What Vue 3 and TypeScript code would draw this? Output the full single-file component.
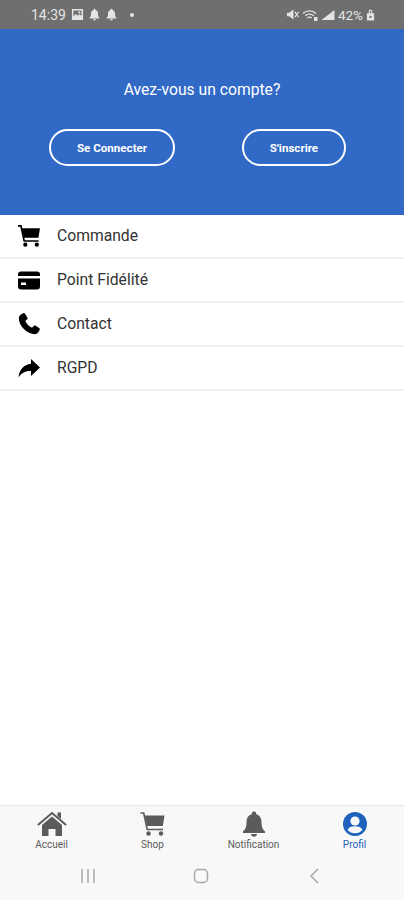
<script setup lang="ts">
interface MenuItem {
  label: string;
  icon: "cart" | "card" | "phone" | "share";
}

interface TabItem {
  label: string;
  icon: "home" | "cart" | "bell" | "user";
  active?: boolean;
}

const menu: MenuItem[] = [
  { label: "Commande", icon: "cart" },
  { label: "Point Fidélité", icon: "card" },
  { label: "Contact", icon: "phone" },
  { label: "RGPD", icon: "share" },
];

const tabs: TabItem[] = [
  { label: "Accueil", icon: "home" },
  { label: "Shop", icon: "cart" },
  { label: "Notification", icon: "bell" },
  { label: "Profil", icon: "user", active: true },
];

const BELL = "M12 1.2c1 0 1.8.8 1.8 1.8v.5c3 .8 4.7 3.4 4.7 6.5 0 4 .7 6.3 2.5 8V19.500H3V18c1.800-1.700 2.500-4 2.500-8 0-3.100 1.700-5.700 4.700-6.500V3c0-1 .8-1.800 1.800-1.800zM9.300 20.500h5.400c0 1.500-1.200 2.600-2.700 2.600s-2.700-1.100-2.700-2.600z";
const BASKET = "M4.300 3.600H24L22.300 14H6.400z";
const HANDLE = "M0 1h3.200l3.500 16.500H22.500";
</script>

<template>
  <div class="screen">
    <header class="status">
      <div class="status__left">
        <span class="status__time">14:39</span>
        <svg class="status__icon" viewBox="0 0 14 14" width="13" height="13">
          <path fill="#e4e4e4" fill-rule="evenodd" d="M1 1h12v12H1zM2.600 2.600v6.200l2.600-2.400 2 1.800 2-1.400 2.200 1.600V2.600zM9 3.600a1.200 1.200 0 1 1 0 2.400 1.200 1.200 0 0 1 0-2.400z" />
        </svg>
        <svg class="status__icon" viewBox="0 0 24 24" width="13" height="13"><path fill="#e4e4e4" :d="BELL" /></svg>
        <svg class="status__icon" viewBox="0 0 24 24" width="13" height="13"><path fill="#e4e4e4" :d="BELL" /></svg>
        <span class="status__dot"></span>
      </div>
      <div class="status__right">
        <svg viewBox="0 0 14 14" width="13" height="13">
          <path fill="#e4e4e4" d="M1 5h2.400L8 1.600v10.800L3.400 9H1z" />
          <path stroke="#e4e4e4" stroke-width="1.300" d="M9.500 4l4 6M13.500 4l-4 6" />
        </svg>
        <svg viewBox="0 0 16 14" width="16" height="14">
          <path fill="none" stroke="#e4e4e4" stroke-width="1.400" d="M1 5.400c3.600-3.400 9.400-3.400 13 0M3.200 7.800c2.400-2.200 6.200-2.200 8.600 0M5.400 10c1.200-1 3-1 4.200 0" />
          <path fill="#e4e4e4" d="M12 9h3.500v4H12z" />
        </svg>
        <svg viewBox="0 0 14 12" width="14" height="12"><path fill="#e4e4e4" d="M13.500 1v10H.5z" /></svg>
        <span class="status__pct">42%</span>
        <svg viewBox="0 0 10 12" width="9" height="12">
          <path fill="#e4e4e4" fill-rule="evenodd" d="M3 1.800a2 1.800 0 0 1 4 0V4h2v8H1V4h2zM4.200 4h1.600V2a.8.8 0 0 0-1.600 0zM5 6.800a1.300 1.300 0 1 0 0 2.600 1.300 1.300 0 0 0 0-2.600z" />
        </svg>
      </div>
    </header>

    <section class="hero">
      <p class="hero__title">Avez-vous un compte?</p>
      <div class="hero__actions">
        <button class="pill pill--login" type="button">Se Connecter</button>
        <button class="pill pill--signup" type="button">S'inscrire</button>
      </div>
    </section>

    <ul class="menu">
      <li v-for="item in menu" :key="item.label" class="menu__row">
        <span class="menu__icon">
          <svg v-if="item.icon === 'cart'" viewBox="0 0 24 24" width="22" height="22">
            <path :d="BASKET" />
            <path fill="none" stroke="#000" stroke-width="1.800" :d="HANDLE" />
            <circle cx="8" cy="21.500" r="2.300" />
            <circle cx="20.500" cy="21.500" r="2.300" />
          </svg>
          <svg v-else-if="item.icon === 'card'" viewBox="0 0 24 24" width="24" height="24">
            <path fill-rule="evenodd" d="M4 3.500h16a3 3 0 0 1 3 3V8H1V6.500a3 3 0 0 1 3-3zM1 10.500h22v8a3 3 0 0 1-3 3H4a3 3 0 0 1-3-3zM4 14.500v2.500h5v-2.500z" />
          </svg>
          <svg v-else-if="item.icon === 'phone'" viewBox="0 0 24 24" width="24" height="24">
            <path d="M6.300 1.200c.7-.3 1.400 0 1.800.6l2.200 3.600c.4.6.3 1.300-.2 1.800L8.300 9c1.300 2.900 3.700 5.300 6.700 6.700l1.800-1.800c.5-.5 1.200-.6 1.800-.2l3.500 2.200c.6.400.9 1.200.6 1.800-.8 2.100-2.500 4.500-4.700 4.500C10 22.200 1.800 14 1.800 6c0-2.200 2.400-4 4.500-4.800z" />
          </svg>
          <svg v-else viewBox="0 0 24 24" width="24" height="24">
            <path d="M14 3l9 8.500-9 8.500v-4.900c-5.500 0-9.500 1.700-12.500 6.400C2 14.500 6.500 8.600 14 7.800z" />
          </svg>
        </span>
        <span class="menu__label">{{ item.label }}</span>
      </li>
    </ul>

    <div class="spacer"></div>

    <nav class="tabs">
      <div v-for="tab in tabs" :key="tab.label" class="tab" :class="{ 'tab--active': tab.active }">
        <span class="tab__glyph">
          <svg v-if="tab.icon === 'home'" viewBox="0 0 30 26" width="30" height="26">
            <path d="M20.500 1.500h3.500v6.500l-3.500-3z" />
            <path fill="none" stroke="#5b5b5b" stroke-width="2" stroke-linecap="round" d="M1.500 13.500L15 2l13.500 11.500" />
            <path fill-rule="evenodd" d="M15 5.500l10 8.500v11h-6.500v-7h-7v7H5V14z" />
          </svg>
          <svg v-else-if="tab.icon === 'cart'" viewBox="0 0 24 24" width="25" height="24">
            <path :d="BASKET" />
            <path fill="none" stroke="#5b5b5b" stroke-width="1.600" :d="HANDLE" />
            <circle cx="8" cy="21.500" r="2.200" />
            <circle cx="20.500" cy="21.500" r="2.200" />
          </svg>
          <svg v-else-if="tab.icon === 'bell'" viewBox="0 0 24 26" width="24" height="26">
            <path d="M12 .5c1.300 0 2.200.9 2.200 2v.8c3.600 1 5.300 4 5.300 7.700 0 4.600.8 7.300 3.500 9.500V22H1v-1.500c2.700-2.200 3.500-4.900 3.500-9.500 0-3.700 1.700-6.700 5.300-7.700v-.8c0-1.100.9-2 2.200-2zM9 23h6c0 1.600-1.300 2.800-3 2.800S9 24.600 9 23z" />
          </svg>
          <svg v-else viewBox="0 0 24 24" width="24" height="24">
            <circle cx="12" cy="12" r="12" fill="#1e62bd" />
            <circle cx="12" cy="9" r="4.600" fill="#f8f8f8" />
            <path fill="#f8f8f8" d="M4.500 18c1-2.800 4-3.800 7.500-3.800s6.500 1 7.500 3.800c-1.800 2-4.500 3.300-7.500 3.300S6.300 20 4.500 18z" />
          </svg>
        </span>
        <span class="tab__label">{{ tab.label }}</span>
      </div>
    </nav>

    <footer class="sysnav">
      <svg viewBox="0 0 16 16" width="16" height="16">
        <path stroke="#a8a8a8" stroke-width="1.500" d="M2 1v14M8 1v14M14 1v14" />
      </svg>
      <svg viewBox="0 0 16 16" width="16" height="16">
        <rect x="1.500" y="1.500" width="13" height="13" rx="4" fill="none" stroke="#a8a8a8" stroke-width="1.500" />
      </svg>
      <svg viewBox="0 0 16 16" width="16" height="16">
        <path fill="none" stroke="#a8a8a8" stroke-width="1.500" d="M12 1L5 8l7 7" />
      </svg>
    </footer>
  </div>
</template>

<style scoped>
.screen {
  width: 404px;
  height: 900px;
  display: flex;
  flex-direction: column;
  overflow: hidden;
  background: #fff;
  font-family: Roboto, "Liberation Sans", sans-serif;
}

.status {
  height: 29px;
  flex: none;
  display: flex;
  align-items: center;
  justify-content: space-between;
  padding: 0 29px 0 31px;
  background: #6f6f6f;
  color: #e4e4e4;
  font-size: 14px;
}

.status__left,
.status__right {
  display: flex;
  align-items: center;
}

.status__left {
  gap: 4px;
}

.status__right {
  gap: 3px;
}

.status__time {
  margin-right: 1px;
}

.status__pct {
  font-size: 13.5px;
}

.status__dot {
  width: 4px;
  height: 4px;
  margin-left: 8px;
  border-radius: 50%;
  background: #e4e4e4;
}

.hero {
  height: 186px;
  flex: none;
  box-sizing: border-box;
  padding-top: 51px;
  background: #3069c6;
  color: #fff;
  text-align: center;
}

.hero__title {
  margin: 0;
  font-size: 15.7px;
  line-height: 20px;
}

.hero__actions {
  display: flex;
  margin-top: 29px;
  padding-left: 49px;
  gap: 67px;
}

.pill {
  height: 37px;
  box-sizing: border-box;
  border: 2px solid #fff;
  border-radius: 19px;
  background: transparent;
  color: #fff;
  font: 700 11.6px Roboto, "Liberation Sans", sans-serif;
}

.pill--login {
  width: 126px;
}

.pill--signup {
  width: 104px;
}

.menu {
  margin: 0;
  padding: 0;
  list-style: none;
}

.menu__row {
  height: 44px;
  box-sizing: border-box;
  display: flex;
  align-items: center;
  padding-left: 17px;
  border-bottom: 2px solid #f1f1f1;
  color: #333;
  font-size: 15.7px;
}

.menu__icon {
  width: 40px;
  display: flex;
  justify-content: center;
  padding-right: 16px;
  box-sizing: border-box;
}

.menu__label {
  margin-bottom: 2px;
}

.spacer {
  flex: 1;
}

.tabs {
  height: 53px;
  flex: none;
  box-sizing: border-box;
  display: grid;
  grid-template-columns: repeat(4, 101px);
  padding-left: 1px;
  border-top: 1px solid #e8e8e8;
  background: #f8f8f8;
}

.tab {
  display: flex;
  flex-direction: column;
  align-items: center;
  padding-top: 4px;
  color: #5b5b5b;
  fill: #5b5b5b;
}

.tab__glyph {
  height: 28px;
  display: flex;
  align-items: center;
}

.tab__label {
  margin-top: 1px;
  font-size: 10px;
  line-height: 11px;
}

.tab--active {
  color: #1e62bd;
}

.sysnav {
  height: 42px;
  flex: none;
  box-sizing: border-box;
  display: flex;
  align-items: center;
  justify-content: space-between;
  padding: 0 82px 6px 80px;
  background: #f8f8f8;
}
</style>
